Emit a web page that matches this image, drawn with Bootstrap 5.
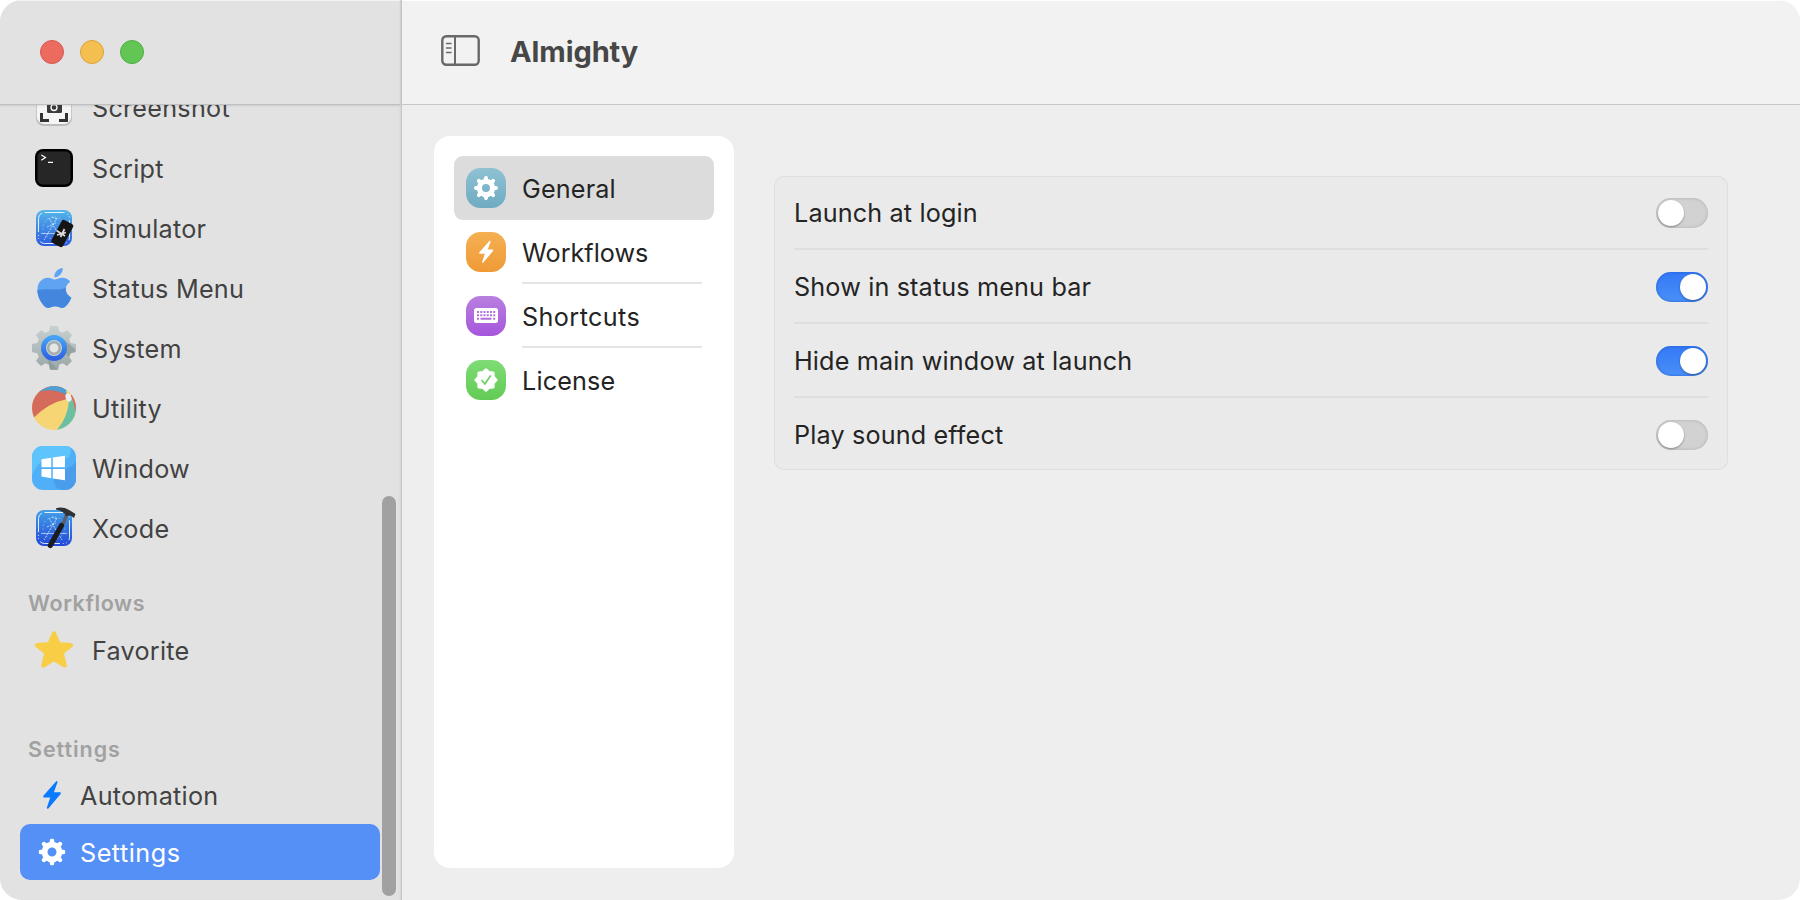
<!DOCTYPE html>
<html lang="en">
<head>
<meta charset="utf-8">
<title>Almighty</title>
<meta name="viewport" content="width=device-width, initial-scale=1">
<link href="https://cdn.jsdelivr.net/npm/bootstrap@5.3.0/dist/css/bootstrap.min.css" rel="stylesheet">
<style>
  body { background: #fff; font-family: Inter, "Liberation Sans", sans-serif; font-size: 25.2px; line-height: 32px; letter-spacing: .15px; color: #242424; }
  .app-window { width: 1800px; height: 900px; border-radius: 22px; background: #eee; }
  .sidebar { width: 402px; background: #e2e2e2; border-right: 1px solid #c6c6c6; box-shadow: inset -2px 0 2px -1px #d2d2d2; color: #424242; letter-spacing: .25px; }
  .titlebar { height: 105px; flex: none; border-bottom: 1px solid #c6c6c6; box-shadow: inset 0 2px 1px -1px #fff; }
  .sidebar .titlebar { padding-left: 40px; gap: 16px; border-bottom-color: #bfbfbf; box-shadow: inset 0 2px 1px -1px #f4f4f4, 0 1px 2px rgba(0,0,0,.1); width: 400px; z-index: 1; }
  .light { width: 24px; height: 24px; border-radius: 50%; border: 1px solid; }
  .light-close { background: #ed6a5e; border-color: #d6574c; }
  .light-min { background: #f5bf4f; border-color: #d9a33c; }
  .light-max { background: #62c655; border-color: #4fab43; }
  .side-list { margin-top: -27px; }
  .side-item { height: 60px; padding-left: 32px; gap: 16px; }
  .side-item:first-child { padding-bottom: 2px; }
  .side-item svg { flex: none; }
  .side-item span, .side-small span { padding-top: 2px; }
  .side-head { padding-left: 28px; font-weight: 600; font-size: 21.5px; color: #a1a1a1; letter-spacing: .6px; }
  .side-small { height: 56px; padding-left: 18px; margin: 0 21px 0 20px; border-radius: 10px; gap: 14px; }
  .side-small.current { background: #5590f6; color: #fff; letter-spacing: .5px; }
  .scroll-thumb { left: 382px; top: 496px; width: 14px; height: 400px; border-radius: 7px; background: #a1a1a1; z-index: 2; }
  .main-pane .titlebar { background: #f2f2f2; padding-left: 39px; gap: 29px; }
  .app-title { font-size: 29px; font-weight: 700; color: #474747; margin: 0; line-height: 36px; letter-spacing: -.1px; }
  .content-row { padding: 31px 72px 32px 32px; gap: 40px; }
  .tabs-panel { width: 300px; flex: none; background: #fff; border-radius: 16px; padding: 20px; }
  .tab-row { height: 64px; padding-left: 12px; gap: 16px; border-radius: 9px; color: #242424; }
  .tab-row.current { background: #dcdcdc; }
  .tab-row svg { flex: none; }
  .tab-label { width: 180px; height: 64px; padding-top: 2px; line-height: 62px; }
  .tab-label.ruled { border-bottom: 2px solid #e4e4e4; line-height: 62px; }
  .options { margin-top: 40px; height: 294px; padding: 0 20px; border-radius: 10px; background: #eaeaea; box-shadow: inset 0 0 0 1px #dfdfdf; }
  .option { height: 74px; padding-top: 2px; border-bottom: 2px solid #dedede; }
  .option:last-child { height: 72px; border-bottom: 0; }
  .form-switch.toggle { padding: 0; margin: 0; min-height: 0; height: 30px; }
  .toggle .form-check-input { width: 52px; height: 30px; margin: 0; border: 0; border-radius: 15px; background: #d2d2d2; box-shadow: inset 0 0 3px 1px #bdbdbd; padding: 2px; display: block; float: none; }
  .toggle .form-check-input::before { content: ""; display: block; width: 26px; height: 26px; border-radius: 50%; background: #fff; box-shadow: 0 1px 2px rgba(0,0,0,.35); }
  .toggle .form-check-input:checked { background: linear-gradient(#3478f6, #4a90f7); box-shadow: inset 0 0 2px 1px rgba(30,90,200,.45); }
  .toggle .form-check-input:checked::before { margin-left: 22px; }
</style>
</head>
<body>
<svg width="0" height="0" class="position-absolute" aria-hidden="true">
  <defs>
    <linearGradient id="gTeal" x2="0" y2="1"><stop stop-color="#8fc1d2"/><stop offset="1" stop-color="#6eabc2"/></linearGradient>
    <linearGradient id="gOrange" x2="0" y2="1"><stop stop-color="#f4b052"/><stop offset="1" stop-color="#f09a37"/></linearGradient>
    <linearGradient id="gPurple" x2="0" y2="1"><stop stop-color="#b97fe0"/><stop offset="1" stop-color="#a656dc"/></linearGradient>
    <linearGradient id="gGreen" x2="0" y2="1"><stop stop-color="#7fdc76"/><stop offset="1" stop-color="#62cb55"/></linearGradient>
    <linearGradient id="gSky" x2="0" y2="1"><stop stop-color="#55b7ea"/><stop offset="1" stop-color="#2c5ce0"/></linearGradient>
    <linearGradient id="gCode" x2="0" y2="1"><stop stop-color="#43a1e8"/><stop offset="1" stop-color="#2248d8"/></linearGradient>
    <linearGradient id="gSteel" x2="0" y2="1"><stop stop-color="#c9d1d1"/><stop offset="1" stop-color="#9aa7a7"/></linearGradient>
    <linearGradient id="gRing" x2="0" y2="1"><stop stop-color="#46a2f5"/><stop offset="1" stop-color="#2d63e2"/></linearGradient>
    <symbol id="gear" viewBox="-12 -12 24 24"><g fill="none" stroke="currentColor"><circle r="6.6" stroke-width="5.2"/><path stroke-width="4" stroke-linecap="round" d="M0-8V-10M0 8V10M-8 0H-10M8 0H10M5.66-5.66L7.1-7.1M5.66 5.66L7.1 7.1M-5.66-5.66L-7.1-7.1M-5.66 5.66L-7.1 7.1"/></g></symbol>
    <symbol id="bolt" viewBox="0 0 18 28"><path fill="currentColor" d="M13.2.3 .4 14.7Q-.4 16 1 16.4H7.2L3.9 26.6Q3.8 28.4 5.4 27.4L17.6 12.9Q18.4 11.6 17 11.3H10.9L14.4 1.5Q14.6-.4 13.2.3Z"/></symbol>
    <symbol id="blueprint" viewBox="0 0 36 36"><g fill="none" stroke="#fff"><rect x="2.5" y="2.5" width="31" height="31" rx="6" stroke-opacity=".85" stroke-dasharray="20 3 1 2 1 3"/><path stroke-opacity=".65" stroke-dasharray="2 1" d="M13 8 26 30M21 8 8 30M16 7l5 2M11 17l9-4"/><path stroke-opacity=".55" d="M5 23.5H31"/><circle cx="18" cy="18" r="11" stroke-opacity=".3" stroke-dasharray="2 2"/></g></symbol>
    <clipPath id="ballClip"><circle cx="22" cy="22" r="22"/></clipPath>
    <clipPath id="winClip"><rect width="44" height="44" rx="11"/></clipPath>
    <path id="apple" d="M12.152 6.896c-.948 0-2.415-1.078-3.96-1.04-2.04.027-3.91 1.183-4.961 3.014-2.117 3.675-.546 9.103 1.519 12.09 1.013 1.454 2.208 3.09 3.792 3.039 1.52-.065 2.09-.987 3.935-.987 1.831 0 2.35.987 3.96.948 1.637-.026 2.676-1.48 3.676-2.948 1.156-1.688 1.636-3.325 1.662-3.415-.039-.013-3.182-1.221-3.22-4.857-.026-3.04 2.48-4.494 2.597-4.559-1.429-2.09-3.623-2.324-4.39-2.376-2-.156-3.675 1.09-4.61 1.09zM15.53 3.83c.843-1.012 1.4-2.427 1.245-3.83-1.207.052-2.662.805-3.532 1.818-.78.896-1.454 2.338-1.273 3.714 1.338.104 2.715-.688 3.559-1.701"/>
    <clipPath id="appleClip"><use href="#apple"/></clipPath>
  </defs>
</svg>

<div class="app-window d-flex overflow-hidden position-relative">
  <aside class="sidebar d-flex flex-column flex-shrink-0">
    <div class="titlebar d-flex align-items-center position-relative">
      <i class="light light-close"></i><i class="light light-min"></i><i class="light light-max"></i>
    </div>
    <nav class="overflow-hidden flex-grow-1">
      <div class="side-list">
        <div class="side-item d-flex align-items-center">
          <svg width="44" height="44"><rect x="4" y="4" width="36" height="37" rx="8" fill="#bdbdbd"/><rect x="4.8" y="4" width="34.4" height="35" rx="7.5" fill="#f5f5f5"/><path d="M9.5 28V35.5H17M27 35.5H34.500V28M9.500 16V9.500H17M27 9.500H34.500V16" fill="none" stroke="#333" stroke-width="3"/><rect x="15" y="16" width="15" height="12" rx="1.500" fill="#3b3b3b"/><circle cx="22" cy="22.500" r="3" fill="none" stroke="#fff" stroke-width="1.300"/></svg>
          <span>Screenshot</span>
        </div>
        <div class="side-item d-flex align-items-center">
          <svg width="44" height="44"><rect x="3" y="3" width="38" height="38" rx="8" fill="#000"/><rect x="5.500" y="5.500" width="33" height="33" rx="5" fill="#262626"/><path d="M9.300 9 13.500 11.500 9.300 14.200M16 16.400H21" fill="none" stroke="#fff" stroke-width="1.200"/></svg>
          <span>Script</span>
        </div>
        <div class="side-item d-flex align-items-center">
          <svg width="44" height="44"><rect x="4" y="4" width="36" height="36" rx="8" fill="url(#gSky)"/><use href="#blueprint" x="4" y="4" width="36" height="36"/><g transform="translate(30.300 27.500) rotate(28)"><rect x="-6.500" y="-13" width="13" height="26" rx="2.500" fill="#151515"/></g><path d="M32.500 23 28.500 31M24.500 24.500 33 30M25 29 34 26.500" stroke="#d9d9d9" stroke-width="1.800" fill="none"/></svg>
          <span>Simulator</span>
        </div>
        <div class="side-item d-flex align-items-center">
          <svg width="44" height="44"><g transform="translate(1.500 2) scale(1.740 1.667)"><use href="#apple" fill="#5fa4f2"/><path clip-path="url(#appleClip)" fill="#4386dd" d="M0 13.800Q5 12.200 12 12.900 18 13.300 20 10.500L24 13V24H0Z"/></g></svg>
          <span>Status Menu</span>
        </div>
        <div class="side-item d-flex align-items-center">
          <svg width="44" height="44"><g fill="url(#gSteel)"><path d="M18 0H26L27.200 5.300 30.700 6.800 35 3.900 40 9 37.200 13.300 38.700 17 44 18V26L38.700 27.200 37.200 30.700 40 35 35 40 30.700 37.200 27.200 38.700 26 44H18L17 38.700 13.300 37.200 9 40 4 35 6.800 30.700 5.300 27.200 0 26V18L5.300 17 6.800 13.300 4 9 9 4 13.300 6.800 17 5.300Z"/></g><path d="M31 13 43 23V26L38.700 27.200 37 31 31 25ZM16 33 25 43H18L17 38.700Z" fill="#839090" opacity=".55"/><circle cx="22" cy="22" r="10.500" fill="#cdd4d4" stroke="url(#gRing)" stroke-width="5"/><circle cx="22" cy="22" r="5.800" fill="#e6e6e6" stroke="#a4adad" stroke-width="2.600"/></svg>
          <span>System</span>
        </div>
        <div class="side-item d-flex align-items-center">
          <svg width="44" height="44"><g clip-path="url(#ballClip)"><path fill="#f5d574" d="M0 0H44V44H0Z"/><path fill="#d56b5a" d="M0 0H30L35 8V13Q16 17 2 31.500L-2 34Z"/><path fill="#4f9fd7" d="M6 6Q20 1.500 34 8.500L34.500 3 22-2Z"/><path fill="#6bc0a4" d="M37 14Q36 32 24 45L44 44V22L39.500 12Z"/><path fill="#d56b5a" d="M38.500 10Q42 16 43.500 25L46 24V12L40 8Z"/><ellipse cx="36.500" cy="11.500" rx="2.800" ry="4.200" transform="rotate(-20 36.500 11.500)" fill="#eceff1"/></g></svg>
          <span>Utility</span>
        </div>
        <div class="side-item d-flex align-items-center">
          <svg width="44" height="44"><g clip-path="url(#winClip)"><path fill="#4fb0f9" d="M0 0H44V44H0Z"/><path fill="#5fc4fc" d="M0 0H37Q41 5 37 11 34 14 27 13 6 10 0 30Z"/><path fill="#4a9deb" d="M44 15Q42 20 33 23 21 26 22 36 23 43 31 44H44Z"/></g><path fill="#fff" d="M9.500 13.300 19.300 11.800V21.200H9.500ZM20.800 11.500 33 9.700V21.200H20.800ZM9.500 23H19.300V32.200L9.500 30.600ZM20.800 23H33V34.300L20.800 32.400Z"/></svg>
          <span>Window</span>
        </div>
        <div class="side-item d-flex align-items-center">
          <svg width="44" height="44" overflow="visible"><rect x="4" y="4" width="36" height="36" rx="8" fill="url(#gCode)"/><use href="#blueprint" x="4" y="4" width="36" height="36"/><path d="M35.500 7 30 20" stroke="#5c6066" stroke-width="3.400"/><path d="M29.500 19.500 18.300 39.500" stroke="#1b1c20" stroke-width="5.200" stroke-linecap="round"/><path d="M24 2.300Q31 .200 38 4.500L43.500 8 42 12 38.500 9.500 34 10Q32 5 24 3.500Z" fill="#2e3136"/></svg>
          <span>Xcode</span>
        </div>
        <div class="side-head" style="height:62px;padding-top:29px">Workflows</div>
        <div class="side-item d-flex align-items-center">
          <svg width="44" height="44"><path d="M22 5.500 26.500 16.200 38.800 17.200 29.400 24.800 32.600 37.300 22 30.900 11.400 37.300 14.600 24.800 5.200 17.200 17.500 16.200Z" fill="#f9ce47" stroke="#f9ce47" stroke-width="4.500" stroke-linejoin="round"/></svg>
          <span>Favorite</span>
        </div>
        <div class="side-head" style="height:87px;padding-top:53px;letter-spacing:.95px">Settings</div>
        <div class="side-small d-flex align-items-center" style="margin-bottom:1px">
          <svg width="28" height="28"><use href="#bolt" x="5" y="0" width="18" height="28" color="#0a7aff"/></svg>
          <span>Automation</span>
        </div>
        <div class="side-small current d-flex align-items-center">
          <svg width="28" height="28"><use href="#gear" x="0.500" y="0.500" width="27" height="27"/></svg>
          <span>Settings</span>
        </div>
      </div>
    </nav>
  </aside>
  <div class="scroll-thumb position-absolute"></div>

  <main class="main-pane flex-grow-1 d-flex flex-column">
    <header class="titlebar d-flex align-items-center">
      <svg width="40" height="32" fill="none" stroke="#696969" style="margin-top:-2px"><rect x="1.300" y="1.300" width="36.400" height="28.400" rx="4" stroke-width="2.400"/><path d="M14 1V30" stroke-width="2"/><path d="M5.500 8.500H10M5.500 13H10M5.500 17.500H10" stroke-width="1.500" stroke-linecap="round"/></svg>
      <h1 class="app-title">Almighty</h1>
    </header>
    <div class="content-row d-flex flex-grow-1">
      <div class="tabs-panel">
        <div class="tab-row current d-flex align-items-center">
          <svg width="40" height="40"><rect width="40" height="40" rx="14.500" fill="url(#gTeal)"/><use href="#gear" x="8" y="8" width="24" height="24" color="#fff"/></svg>
          <div class="tab-label">General</div>
        </div>
        <div class="tab-row d-flex align-items-center">
          <svg width="40" height="40"><rect width="40" height="40" rx="14.500" fill="url(#gOrange)"/><use href="#bolt" x="13" y="8.500" width="14.500" height="22.500" color="#fff"/></svg>
          <div class="tab-label ruled" style="letter-spacing:0">Workflows</div>
        </div>
        <div class="tab-row d-flex align-items-center">
          <svg width="40" height="40"><rect width="40" height="40" rx="14.500" fill="url(#gPurple)"/><rect x="8" y="12" width="24" height="15" rx="2.500" fill="#fff"/><g stroke="#b070de" stroke-width="2"><path stroke-dasharray="2 1.250" d="M11 16H29.500M11 19.300H29.500"/><path d="M11 22.700H13M14.500 22.700H25.500M27.200 22.700H29.200"/></g></svg>
          <div class="tab-label ruled" style="letter-spacing:.4px">Shortcuts</div>
        </div>
        <div class="tab-row d-flex align-items-center">
          <svg width="40" height="40"><rect width="40" height="40" rx="14.500" fill="url(#gGreen)"/><g fill="#fff" stroke="#fff" stroke-width="3" stroke-linejoin="round"><path d="M20 9.800 22.900 12.600 27.100 12.900 27.200 17 30.100 20 27.200 23 27.100 27.100 22.900 27.400 20 30.200 17.100 27.400 12.900 27.100 12.800 23 9.900 20 12.800 17 12.900 12.900 17.100 12.600Z"/></g><path d="M16 20.500 18.900 24 24.300 16" fill="none" stroke="#70d266" stroke-width="1.800" stroke-linecap="round" stroke-linejoin="round"/></svg>
          <div class="tab-label">License</div>
        </div>
      </div>
      <section class="options flex-grow-1">
        <div class="option d-flex align-items-center justify-content-between"><label for="o1">Launch at login</label><div class="form-check form-switch toggle"><input class="form-check-input" type="checkbox" id="o1"></div></div>
        <div class="option d-flex align-items-center justify-content-between"><label for="o2">Show in status menu bar</label><div class="form-check form-switch toggle"><input class="form-check-input" type="checkbox" id="o2" checked></div></div>
        <div class="option d-flex align-items-center justify-content-between"><label for="o3">Hide main window at launch</label><div class="form-check form-switch toggle"><input class="form-check-input" type="checkbox" id="o3" checked></div></div>
        <div class="option d-flex align-items-center justify-content-between"><label for="o4">Play sound effect</label><div class="form-check form-switch toggle"><input class="form-check-input" type="checkbox" id="o4"></div></div>
      </section>
    </div>
  </main>
</div>
<script src="https://cdn.jsdelivr.net/npm/bootstrap@5.3.0/dist/js/bootstrap.bundle.min.js"></script>
</body>
</html>
